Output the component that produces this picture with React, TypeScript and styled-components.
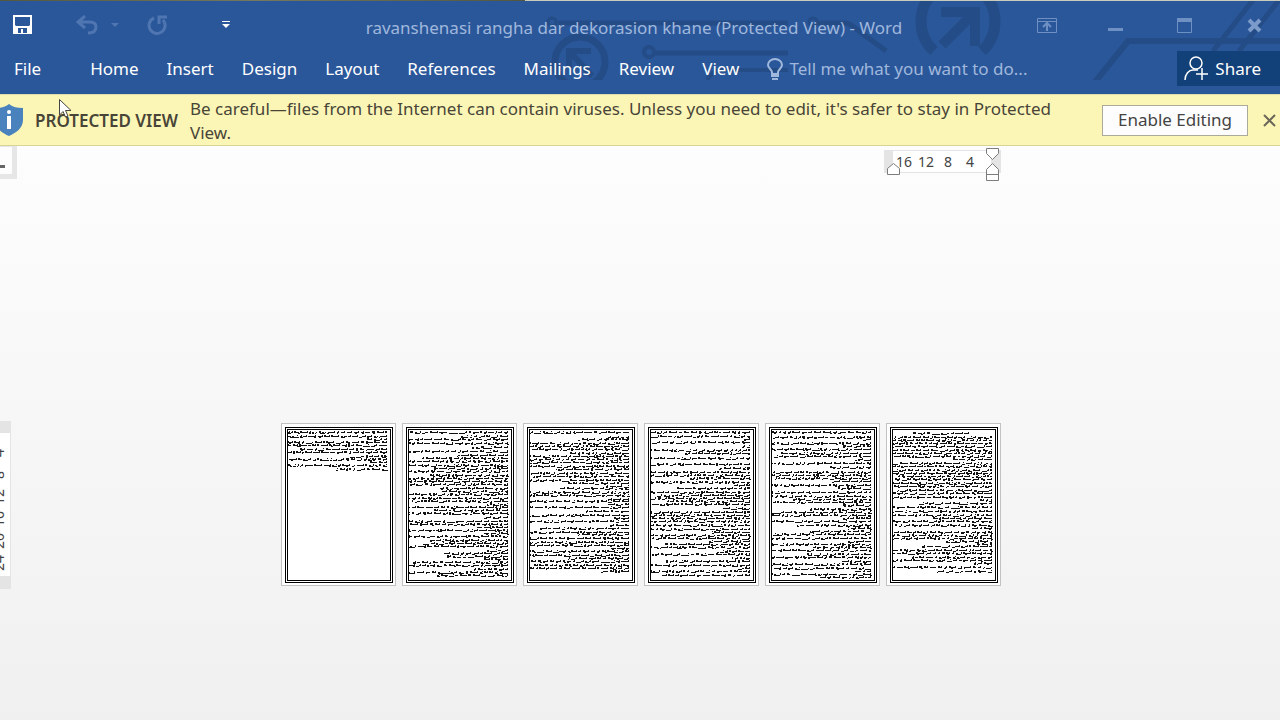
import React from "react";
import styled, { createGlobalStyle } from "styled-components";

const GlobalStyle = createGlobalStyle`
  *, *::before, *::after { box-sizing: border-box; }
  body {
    margin: 0;
    font-family: "Noto Sans", "Open Sans", sans-serif;
    font-size: 17px;
    background: #f1f1f1;
    overflow: hidden;
  }
  button, input { font: inherit; }
`;

const Window = styled.div`
  position: relative;
  display: flex;
  flex-direction: column;
  min-height: 100vh;
  overflow: hidden;
`;

const DesktopStrip = styled.div`
  height: 1px;
  background: linear-gradient(to right, #55583f 0, #77775f 20%, #55563f 41%, #c9cbbd 41%);
`;

const Header = styled.header`
  position: relative;
  height: 93px;
  background: #2a579a;
  color: #fff;
`;

const Circuit = styled.svg`
  position: absolute;
  top: 0;
  right: 0;
`;

const TitleBar = styled.div`
  position: relative;
  display: grid;
  grid-template-columns: 1fr auto 1fr;
  align-items: center;
  height: 50px;
`;

const QuickAccess = styled.div`
  display: flex;
  align-items: center;
  padding: 0 0 2px 12px;
`;

const IconButton = styled.button<{ $after?: number }>`
  display: flex;
  margin: 0 ${(p) => p.$after ?? 0}px 0 0;
  padding: 0;
  border: 0;
  background: none;
  color: inherit;
`;

const Title = styled.h1`
  margin: 0;
  padding: 4px 12px 0 0;
  font-size: 17px;
  font-weight: 400;
  line-height: 24px;
  color: #a0b8dc;
  white-space: nowrap;
`;

const WindowControls = styled.div`
  display: flex;
  align-items: center;
  justify-content: flex-end;
  padding: 0 18px 2px 0;
`;

const Ribbon = styled.div`
  position: relative;
  display: flex;
  align-items: center;
  height: 35px;
`;

const Tabs = styled.nav`
  display: flex;
  gap: 28px;
  padding-left: 14px;
`;

const Tab = styled.button<{ $file?: boolean }>`
  margin: 0 ${(p) => (p.$file ? 21 : 0)}px 0 0;
  padding: 0;
  border: 0;
  background: none;
  color: #fff;
  line-height: 24px;
`;

const TellMe = styled.label`
  display: flex;
  align-items: center;
  flex: 1;
  gap: 6px;
  margin-left: 28px;
`;

const TellMeInput = styled.input`
  flex: 1;
  min-width: 0;
  padding: 0;
  border: 0;
  outline: 0;
  background: none;
  line-height: 24px;
  &::placeholder { color: #a0b8dc; opacity: 1; }
`;

const ShareButton = styled.button`
  display: flex;
  align-items: center;
  gap: 6px;
  height: 35px;
  padding: 0 19px 0 7px;
  border: 0;
  background: #124078;
  color: #fff;
`;

const Banner = styled.section`
  display: flex;
  align-items: center;
  height: 52px;
  padding-right: 4px;
  border-top: 1px solid #e0dcae;
  border-bottom: 1px solid #d8d397;
  background: #fcf6b6;
  color: #484538;
`;

const ShieldIcon = styled.svg`
  flex: none;
  margin-left: -5px;
`;

const BannerTitle = styled.strong`
  margin: 0 12px;
  font-weight: 600;
  white-space: nowrap;
`;

const BannerText = styled.p`
  flex: 1;
  margin: 0;
  padding: 2px 40px 0 0;
  line-height: 24px;
`;

const EnableButton = styled.button`
  width: 146px;
  height: 31px;
  margin-right: 15px;
  padding: 0;
  border: 1px solid #aaa99a;
  background: #fdfdfd;
  color: #444;
  line-height: 24px;
`;

const Workspace = styled.main`
  flex: 1;
  display: grid;
  grid-template-columns: 18px 1fr 16px;
  grid-template-rows: 275px auto 1fr;
  background: linear-gradient(#fdfdfd, #f0f0f0);
`;

const TabSelector = styled.button`
  display: flex;
  align-items: center;
  width: 17px;
  height: 33px;
  padding: 11px 0 0;
  border: 4px solid #e6e6e6;
  border-width: 1px 5px 5px 0;
  background: #fdfdfd;
`;

const Column = styled.div`
  width: 720px;
  margin: 0 auto;
`;

const RulerBar = styled.div`
  position: relative;
  display: flex;
  align-items: center;
  width: 117px;
  height: 23px;
  margin: 4px 0 0 auto;
  border: 1px solid #e4e4e4;
  border-width: 1px 10px 1px 9px;
  background: #fff;
  color: #444;
  font-size: 14px;
  line-height: 20px;
`;

const RulerMark = styled.span`
  width: 22px;
  text-align: center;
`;

const RulerHandle = styled.svg<{ $end?: boolean }>`
  position: absolute;
  top: -3px;
  ${(p) => (p.$end ? "right: -8px;" : "left: -6px;")}
`;

const VerticalRuler = styled.div`
  display: flex;
  flex-direction: column;
  align-items: flex-end;
  width: 11px;
  height: 168px;
  padding: 9px 2px 0 0;
  border: 1px solid #e4e4e4;
  border-width: 12px 1px 13px 0;
  background: #fff;
  color: #444;
  font-size: 14px;
  line-height: 18px;
`;

const VerticalMark = styled.span`
  flex: none;
  height: 22px;
  text-align: center;
  writing-mode: vertical-rl;
  transform: rotate(180deg);
`;

const Pages = styled.div`
  display: flex;
  gap: 6px;
  padding-top: 2px;
`;

const Sheet = styled.article`
  width: 115px;
  height: 163px;
  padding: 3px;
  border: 1px solid #c2c2c2;
  background: #fff;
`;

const SheetFrame = styled.div`
  width: 108px;
  height: 156px;
  border: 3px double #000;
`;

const Pointer = styled.svg`
  position: absolute;
  left: 59px;
  top: 99px;
`;

/* Each miniature line: [top, left, right?] in page pixels. */
type Line = [number, number, number?];

const full = (ys: number[]): Line[] => ys.map((y) => [y, 0]);

const sheets: Line[][] = [
  [...full([3, 7, 13, 16, 23, 30, 36]), [10, 78], [20, 13], [27, 63], [33, 83], [40, 48]],
  [
    ...full([3, 10, 14, 22, 32, 36, 42, 49, 52, 55, 65, 69, 78, 84, 92, 95, 101, 107, 117, 136, 143]),
    [7, 53], [18, 62], [26, 49], [29, 14], [39, 26], [46, 22], [59, 32], [62, 34], [72, 4], [75, 79],
    [81, 26], [88, 76], [98, 69], [104, 76], [111, 22], [114, 14], [121, 79], [124, 36], [127, 39],
    [130, 76], [133, 5], [140, 66], [146, 29],
  ],
  [
    ...full([3, 14, 17, 20, 27, 30, 33, 37, 44, 51, 63, 66, 72, 78, 86, 92, 103, 109, 113, 116, 122, 126, 132, 139]),
    [8, 77], [10, 49], [24, 41], [40, 27], [47, 4], [54, 39], [57, 77], [59, 31], [70, 77], [75, 79],
    [82, 57], [89, 84], [96, 80], [99, 10], [105, 49], [119, 82], [129, 39], [136, 5], [142, 72],
  ],
  [
    ...full([3, 7, 13, 21, 29, 35, 43, 46, 53, 63, 69, 75, 83, 86, 92, 96, 100, 106, 109, 118, 125, 136, 142]),
    [10, 93], [17, 92], [24, 35], [39, 68], [49, 40], [56, 83], [59, 27], [66, 5], [72, 17], [79, 72],
    [89, 2], [103, 62], [112, 59], [115, 15], [122, 67], [129, 82], [132, 14], [139, 88], [146, 12],
  ],
  [
    ...full([3, 8, 14, 20, 27, 34, 43, 46, 56, 63, 67, 73, 83, 86, 92, 105, 109, 115, 121, 128, 135, 139, 145]),
    [10, 91], [17, 72], [24, 9], [30, 84], [38, 59], [49, 4], [52, 61], [59, 67], [70, 22], [76, 72],
    [80, 39], [89, 72], [96, 26], [99, 77], [102, 39], [112, 77], [118, 42], [125, 36], [132, 71],
    [142, 84], [148, 49],
  ],
  [
    [4, 21, 77],
    ...full([8, 11, 14, 17, 21, 24, 27, 34, 37, 41, 44, 50, 54, 57, 64, 68, 78, 82, 86, 92, 96, 103, 106, 109, 121, 124, 131, 138]),
    [30, 61], [47, 6], [61, 5], [71, 88], [74, 27], [89, 41], [99, 78], [112, 54], [115, 85], [117, 28],
    [128, 20], [134, 80], [142, 45],
  ],
];

/* Builds the pen strokes of a line: joined low strokes with short rises and tails. */
function scribble(lines: Line[], seed: number): string {
  let state = seed * 7919 + 17;
  const next = () => {
    state = (state * 1103515245 + 12345) % 2147483648;
    return state / 2147483648;
  };
  let d = "";
  const run = (x: number, y: number, w: number) => {
    d += `M${x} ${y}h${w}v1h${-w}z`;
  };
  lines.forEach(([y, left, right = 100]) => {
    let x = right;
    while (x > left) {
      const word = Math.min(2 + Math.floor(next() * 7), x - left);
      const split = Math.floor(next() * word);
      const drop = next() < 0.35 ? 1 : 0;
      run(x - split, y, split);
      run(x - word, y + drop, word - split);
      if (next() < 0.7) run(x - 1, y - 1, 1);
      if (next() < 0.5) run(x - word, y - 1 + drop, Math.min(2, word));
      if (next() < 0.3) run(x - split - 1, y + 1, 2);
      x -= word + 1 + Math.floor(next() * 2);
    }
  });
  return d;
}

function Miniature({ lines, seed }: { lines: Line[]; seed: number }) {
  return (
    <Sheet>
      <SheetFrame>
        <svg width="102" height="150" viewBox="1 1 102 150" shapeRendering="crispEdges">
          <path d={scribble(lines, seed)} fill="#111" />
        </svg>
      </SheetFrame>
    </Sheet>
  );
}

const tabs = ["Home", "Insert", "Design", "Layout", "References", "Mailings", "Review", "View"];

export default function App() {
  return (
    <Window>
      <GlobalStyle />
      <DesktopStrip />
      <Header>
        <Circuit width="740" height="79" viewBox="540 1 740 79" fill="none" stroke="#244c86">
          <g strokeWidth="5">
            <circle cx="552" cy="22" r="4" strokeWidth="3" />
            <path d="M558 23H788" />
            <circle cx="813" cy="22" r="4" strokeWidth="3" />
            <path d="M818 23H844Q850 23 855 28L886 51" />
            <circle cx="649" cy="52" r="5" strokeWidth="4" />
            <path d="M655 53H788" />
            <path d="M788 70H720Q714 70 707 80" strokeWidth="4" />
            <path d="M1095 82L1128 41H1280" strokeWidth="6" />
            <path d="M1213 51L1253 0M1239 51L1279 0" />
          </g>
          <circle cx="580" cy="62" r="25" strokeWidth="7" />
          <path d="M591 51H569V68M570 52L592 76" strokeWidth="6" />
          <path d="M934 51A40 40 0 0 1 934 -8M982 51A40 40 0 0 0 982 -8" strokeWidth="11" />
          <path d="M941 12H975V46M975 12L942 45" strokeWidth="10" />
        </Circuit>

        <TitleBar>
          <QuickAccess>
            <IconButton aria-label="Save" $after={43}>
              <svg width="21" height="20" viewBox="0 0 21 20">
                <path fillRule="evenodd" fill="#fff" d="M1 0H20V19H1zM3 2V10L4 11H17L18 10V2zM6 13V18H9V14H11V18H15V13z" />
              </svg>
            </IconButton>
            <IconButton aria-label="Undo" $after={12}>
              <svg width="23" height="20" viewBox="0 0 23 20" fill="none" stroke="#5076b1" strokeWidth="3">
                <path d="M9 1L2 7L9 13M2 7H14C19 7 20 10 20 12C20 16 17 18 12 18" />
              </svg>
            </IconButton>
            <IconButton aria-label="Undo history" $after={28}>
              <svg width="8" height="4" viewBox="0 0 8 4"><path d="M0 0H8L4 4z" fill="#5076b1" /></svg>
            </IconButton>
            <IconButton aria-label="Repeat" $after={54}>
              <svg width="21" height="20" viewBox="0 0 21 20" fill="none" stroke="#5076b1" strokeWidth="3">
                <path d="M7 3A8 8 0 1 0 16 5" />
                <path d="M12 9V2H20" />
              </svg>
            </IconButton>
            <IconButton aria-label="Customize Quick Access Toolbar">
              <svg width="8" height="8" viewBox="0 0 8 8" fill="#fff"><path d="M0 0H8V1H0zM0 3H8L4 7z" /></svg>
            </IconButton>
          </QuickAccess>
          <Title>ravanshenasi rangha dar dekorasion khane (Protected View) - Word</Title>
          <WindowControls>
            <IconButton aria-label="Ribbon Display Options" $after={51}>
              <svg width="20" height="15" viewBox="0 0 20 15" fill="none" stroke="#6f90c3">
                <path d="M0.5 0.5H19.5V14.5H0.5zM0 3.5H20" />
                <path d="M10 13V5M6 9L10 5L14 9" strokeWidth="2" />
              </svg>
            </IconButton>
            <IconButton aria-label="Minimize" $after={54}>
              <svg width="15" height="15" viewBox="0 0 15 15"><path d="M0 10H15V13H0z" fill="#6f90c3" /></svg>
            </IconButton>
            <IconButton aria-label="Maximize" $after={55}>
              <svg width="15" height="15" viewBox="0 0 15 15" fill="none" stroke="#6f90c3">
                <path d="M0.5 0.5H14.5V14.5H0.5z" /><path d="M0 2H15" strokeWidth="4" />
              </svg>
            </IconButton>
            <IconButton aria-label="Close">
              <svg width="15" height="15" viewBox="0 0 15 15" stroke="#7d9bca" strokeWidth="4">
                <path d="M2 2L13 13M13 2L2 13" />
              </svg>
            </IconButton>
          </WindowControls>
        </TitleBar>

        <Ribbon>
          <Tabs>
            <Tab $file>File</Tab>
            {tabs.map((t) => <Tab key={t}>{t}</Tab>)}
          </Tabs>
          <TellMe>
            <svg width="16" height="22" viewBox="0 0 16 22" fill="none" stroke="#a0b8dc" strokeWidth="2">
              <path d="M5 16V14C5 12 1 10 1 7A7 6 0 0 1 15 7C15 10 11 12 11 14V16z" />
              <path d="M4 18H12M5 21H11" />
            </svg>
            <TellMeInput type="text" aria-label="Tell me what you want to do" placeholder="Tell me what you want to do..." />
          </TellMe>
          <ShareButton>
            <svg width="25" height="25" viewBox="0 0 25 25" fill="none" stroke="#fff" strokeWidth="1.5">
              <circle cx="12" cy="7" r="6" />
              <path d="M1 24C1 18 5 14 9 14H14M18 12V24M12 18H24" />
            </svg>
            Share
          </ShareButton>
        </Ribbon>
      </Header>

      <Banner>
        <ShieldIcon width="28" height="32" viewBox="0 0 28 32">
          <path d="M14 0C18 3 22 4 28 4V16C28 24 21 29 14 32C7 29 0 24 0 16V4C6 4 10 3 14 0z" fill="#4a82bd" />
          <circle cx="14" cy="8" r="2" fill="#fff" />
          <path d="M12 12H16V25H12z" fill="#fff" />
        </ShieldIcon>
        <BannerTitle>PROTECTED VIEW</BannerTitle>
        <BannerText>
          Be careful—files from the Internet can contain viruses. Unless you need to edit, it's safer to stay in Protected View.
        </BannerText>
        <EnableButton>Enable Editing</EnableButton>
        <IconButton aria-label="Close message">
          <svg width="13" height="13" viewBox="0 0 13 13" stroke="#6a6759" strokeWidth="2">
            <path d="M1 1L12 12M12 1L1 12" />
          </svg>
        </IconButton>
      </Banner>

      <Workspace>
        <TabSelector aria-label="Tab selector">
          <svg width="5" height="3" viewBox="0 0 5 3"><path d="M0 0H5V3H0z" fill="#666" /></svg>
        </TabSelector>
        <Column>
          <RulerBar>
            {["16", "12", "8", "4"].map((n) => <RulerMark key={n}>{n}</RulerMark>)}
            <RulerHandle width="13" height="33" viewBox="0 0 13 33" fill="#fff" stroke="#7c7c7c">
              <path d="M0.5 26.5V20.5L6.5 15.5L12.5 20.5V26.5z" />
            </RulerHandle>
            <RulerHandle $end width="13" height="33" viewBox="0 0 13 33" fill="#fff" stroke="#7c7c7c">
              <path d="M0.5 0.5H12.5V5.5L6.5 11.5L0.5 5.5z" />
              <path d="M0.5 32.5V21.5L6.5 15.5L12.5 21.5V32.5zM0.5 26.5H12.5" />
            </RulerHandle>
          </RulerBar>
        </Column>
        <span />
        <VerticalRuler>
          {["4", "8", "12", "16", "20", "24"].map((n) => <VerticalMark key={n}>{n}</VerticalMark>)}
        </VerticalRuler>
        <Column>
          <Pages>
            {sheets.map((lines, i) => <Miniature key={i} lines={lines} seed={i + 1} />)}
          </Pages>
        </Column>
      </Workspace>

      <Pointer width="14" height="19" viewBox="0 0 14 19">
        <path d="M0.5 0.5V16L4 12.5L6.5 18L9 17L6.5 11.5H12z" fill="#fff" stroke="#444" />
      </Pointer>
    </Window>
  );
}
